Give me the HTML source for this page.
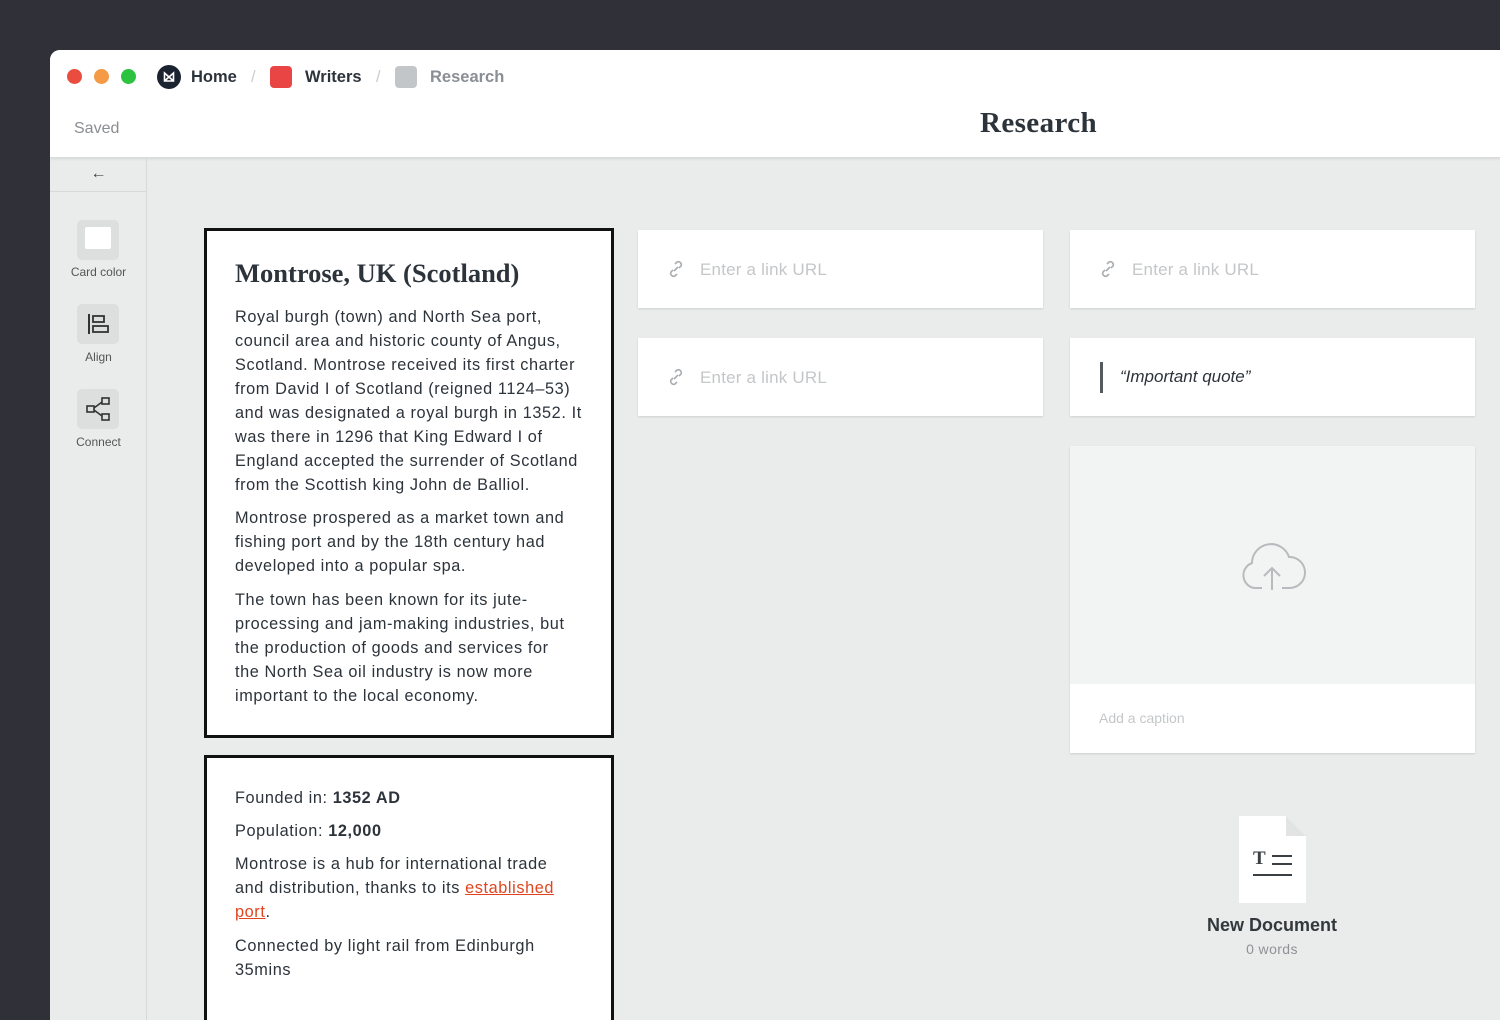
<!DOCTYPE html>
<html><head><meta charset="utf-8"><style>
*{margin:0;padding:0;box-sizing:border-box}
body{width:1500px;height:1000px;background:#2f3038;position:relative;overflow:hidden;font-family:"Liberation Sans",sans-serif;color:#2c333a}
.win{position:absolute;left:50px;top:50px;width:1470px;height:970px;background:#e9ecea;border-top-left-radius:10px;overflow:hidden}
.hdr{position:absolute;left:0;top:0;right:0;height:108px;background:#fff;border-bottom:1px solid #d8dbd9;box-shadow:0 1px 3px rgba(0,0,0,.08)}
.dot{position:absolute;top:19px;width:15px;height:15px;border-radius:50%}
.crumb{position:absolute;top:18px;font-size:16.5px;font-weight:bold}
.side{position:absolute;left:0;top:108px;width:97px;bottom:0;border-right:1px solid #d6d9d7}
.tool{position:absolute;left:27px;width:42px;height:40px;border-radius:5px;background:#dcdfdd}
.tl{position:absolute;left:0;width:97px;text-align:center;font-size:12px;color:#555}
.card{position:absolute;background:#fff;box-shadow:0 1px 2px rgba(0,0,0,.12)}
.txt{font-size:16.3px;line-height:24px;letter-spacing:.6px;white-space:nowrap}
.link{font-size:17px;color:#c4c7c9;position:absolute;left:62px;top:30px;letter-spacing:.2px}
.li{position:absolute;left:28px;top:29px}
</style></head><body>
<div class="win">
 <div class="hdr">
  <div class="dot" style="left:17px;background:#ea4d3f"></div>
  <div class="dot" style="left:44px;background:#f59a47"></div>
  <div class="dot" style="left:71px;background:#2dc23f"></div>
  <div style="position:absolute;left:107px;top:15px;width:24px;height:24px;border-radius:50%;background:#1b2230"><svg width="24" height="24" viewBox="0 0 24 24"><path d="M7.5 8l4.5 4 4.5-4v8h-9zM7.5 16l4.5-4 4.5 4" fill="none" stroke="#fff" stroke-width="1.6"/></svg></div>
  <div class="crumb" style="left:141px">Home</div>
  <div class="crumb" style="left:201px;color:#ccc;font-weight:normal">/</div>
  <div style="position:absolute;left:220px;top:16px;width:22px;height:22px;border-radius:4px;background:#e94545"></div>
  <div class="crumb" style="left:255px">Writers</div>
  <div class="crumb" style="left:326px;color:#ccc;font-weight:normal">/</div>
  <div style="position:absolute;left:345px;top:16px;width:22px;height:22px;border-radius:4px;background:#c3c6c9"></div>
  <div class="crumb" style="left:380px;color:#8a8f95">Research</div>
  <div style="position:absolute;left:24px;top:70px;font-size:16px;color:#8a8e92">Saved</div>
  <div style="position:absolute;left:930px;top:57px;font-family:'Liberation Serif',serif;font-weight:bold;font-size:29px;letter-spacing:.4px;color:#2c333a">Research</div>
 </div>
 <div class="side">
  <div style="position:absolute;left:0;top:0;width:97px;height:34px;border-bottom:1px solid #d6d9d7;text-align:center;font-size:16px;line-height:32px;color:#444">←</div>
  <div class="tool" style="top:62px"><div style="position:absolute;left:8px;top:7px;width:26px;height:22px;background:#fff;border-radius:2px"></div></div>
  <div class="tl" style="top:107px">Card color</div>
  <div class="tool" style="top:146px"><svg width="42" height="40"><path d="M12 10v20" stroke="#333" stroke-width="2"/><rect x="16" y="12" width="11" height="6" fill="none" stroke="#333" stroke-width="1.8"/><rect x="16" y="22" width="15" height="6" fill="none" stroke="#333" stroke-width="1.8"/></svg></div>
  <div class="tl" style="top:192px">Align</div>
  <div class="tool" style="top:231px"><svg width="42" height="40"><rect x="10" y="17" width="7" height="6" fill="none" stroke="#333" stroke-width="1.6"/><rect x="25" y="9" width="7" height="6" fill="none" stroke="#333" stroke-width="1.6"/><rect x="25" y="25" width="7" height="6" fill="none" stroke="#333" stroke-width="1.6"/><path d="M17 19l8-6M17 21l8 6" stroke="#333" stroke-width="1.6"/></svg></div>
  <div class="tl" style="top:277px">Connect</div>
 </div>

 <div class="card" style="left:154px;top:178px;width:410px;height:510px;border:3px solid #111;box-shadow:none">
  <div style="position:absolute;left:28px;top:27px;font-family:'Liberation Serif',serif;font-weight:bold;font-size:26.5px;color:#2c333a">Montrose, UK (Scotland)</div>
  <div class="txt" style="position:absolute;left:28px;top:74px">Royal burgh (town) and North Sea port,<br>council area and historic county of Angus,<br>Scotland. Montrose received its first charter<br>from David I of Scotland (reigned 1124–53)<br>and was designated a royal burgh in 1352. It<br>was there in 1296 that King Edward I of<br>England accepted the surrender of Scotland<br>from the Scottish king John de Balliol.</div>
  <div class="txt" style="position:absolute;left:28px;top:275px">Montrose prospered as a market town and<br>fishing port and by the 18th century had<br>developed into a popular spa.</div>
  <div class="txt" style="position:absolute;left:28px;top:357px">The town has been known for its jute-<br>processing and jam-making industries, but<br>the production of goods and services for<br>the North Sea oil industry is now more<br>important to the local economy.</div>
 </div>
 <div class="card" style="left:154px;top:705px;width:410px;height:300px;border:3px solid #111;box-shadow:none">
  <div class="txt" style="position:absolute;left:28px;top:28px">Founded in: <b>1352 AD</b></div>
  <div class="txt" style="position:absolute;left:28px;top:61px">Population: <b>12,000</b></div>
  <div class="txt" style="position:absolute;left:28px;top:94px">Montrose is a hub for international trade<br>and distribution, thanks to its <span style="color:#e0451f;text-decoration:underline">established </span><br><span style="color:#e0451f;text-decoration:underline">port</span>.</div>
  <div class="txt" style="position:absolute;left:28px;top:176px">Connected by light rail from Edinburgh<br>35mins</div>
 </div>

 <div class="card" style="left:588px;top:180px;width:405px;height:78px"><svg class="li" width="20" height="20" viewBox="0 0 20 20" fill="none" stroke="#a9adb0" stroke-width="1.6"><path d="M8 12l4-4M9 5l2-2a3 3 0 014 4l-2 2M11 15l-2 2a3 3 0 01-4-4l2-2"/></svg><div class="link">Enter a link URL</div></div>
 <div class="card" style="left:1020px;top:180px;width:405px;height:78px"><svg class="li" width="20" height="20" viewBox="0 0 20 20" fill="none" stroke="#a9adb0" stroke-width="1.6"><path d="M8 12l4-4M9 5l2-2a3 3 0 014 4l-2 2M11 15l-2 2a3 3 0 01-4-4l2-2"/></svg><div class="link">Enter a link URL</div></div>
 <div class="card" style="left:588px;top:288px;width:405px;height:78px"><svg class="li" width="20" height="20" viewBox="0 0 20 20" fill="none" stroke="#a9adb0" stroke-width="1.6"><path d="M8 12l4-4M9 5l2-2a3 3 0 014 4l-2 2M11 15l-2 2a3 3 0 01-4-4l2-2"/></svg><div class="link">Enter a link URL</div></div>
 <div class="card" style="left:1020px;top:288px;width:405px;height:78px">
  <div style="position:absolute;left:30px;top:24px;width:3px;height:31px;background:#555a5f"></div>
  <div style="position:absolute;left:50px;top:29px;font-size:17px;font-style:italic;color:#2c333a">“Important quote”</div>
 </div>
 <div class="card" style="left:1020px;top:396px;width:405px;height:307px">
  <div style="position:absolute;left:0;top:0;width:405px;height:238px;background:#f2f3f3"></div>
  <svg style="position:absolute;left:168px;top:92px" width="70" height="54" viewBox="0 0 70 54" fill="none" stroke="#b8bbbd" stroke-width="2"><path d="M24 50H16a13 13 0 01-2-25 19 19 0 0137-6 14 14 0 011 31H44"/><path d="M34 52V31M26 38l8-8 8 8"/></svg>
  <div style="position:absolute;left:29px;top:264px;font-size:14px;color:#c4c7c9">Add a caption</div>
 </div>
 <div style="position:absolute;left:1189px;top:766px;width:67px;height:87px;background:#fff;clip-path:polygon(0 0,70% 0,100% 23%,100% 100%,0 100%);box-shadow:0 1px 2px rgba(0,0,0,.1)"></div>
 <div style="position:absolute;left:1236px;top:766px;width:20px;height:20px;background:#e2e4e3;clip-path:polygon(0 0,100% 100%,0 100%)"></div>
 <div style="position:absolute;left:1203px;top:798px;font-family:'Liberation Serif',serif;font-weight:bold;font-size:19px;color:#3a3f44">T</div>
 <div style="position:absolute;left:1222px;top:805px;width:20px;height:2px;background:#3a3f44"></div>
 <div style="position:absolute;left:1222px;top:813px;width:20px;height:2px;background:#3a3f44"></div>
 <div style="position:absolute;left:1203px;top:824px;width:39px;height:2px;background:#3a3f44"></div>
 <div style="position:absolute;left:1122px;top:865px;width:200px;text-align:center;font-size:18px;font-weight:bold;color:#33383d">New Document</div>
 <div style="position:absolute;left:1122px;top:891px;width:200px;text-align:center;font-size:14px;letter-spacing:.4px;color:#8e9296">0 words</div>
</div>
</body></html>
